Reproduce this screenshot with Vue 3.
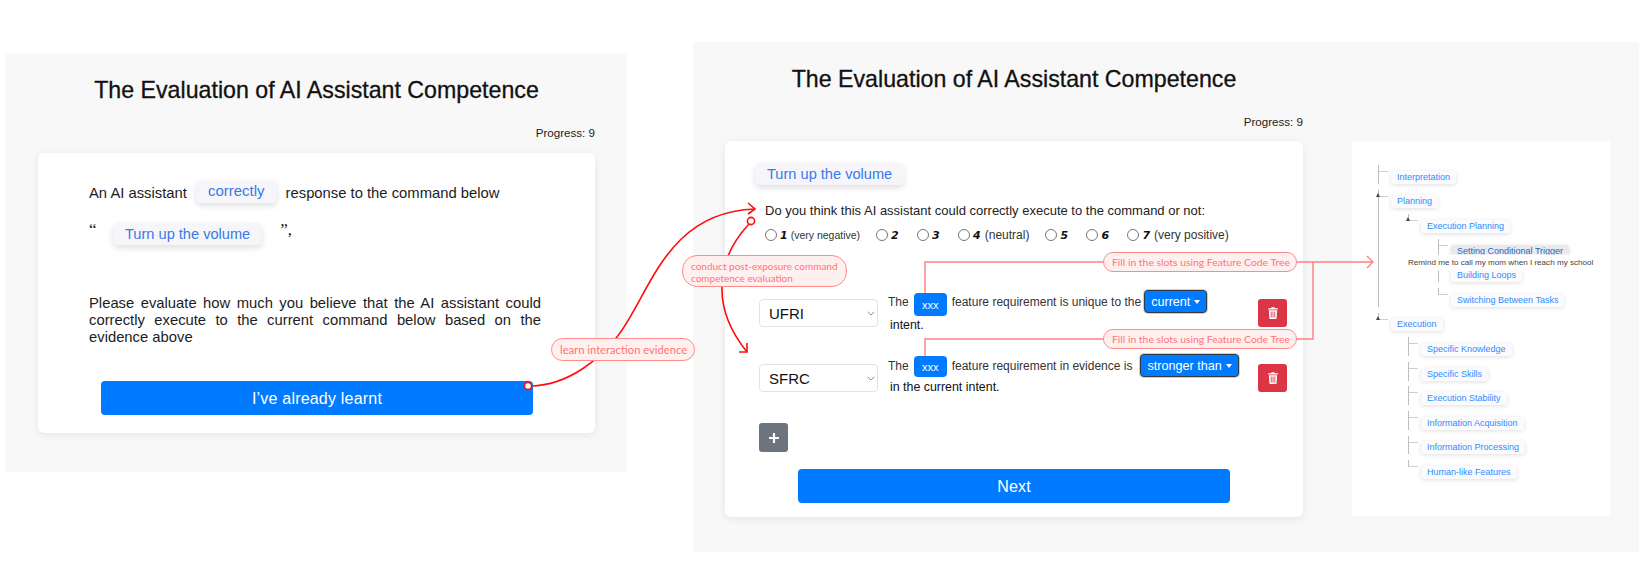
<template>
  <div class="page">
    <!-- first step: learn the evidence -->
    <section class="panel panel-left">
      <div class="main">
        <h1 class="title">The Evaluation of AI Assistant Competence</h1>
        <div class="progress">Progress: 9</div>
        <div class="card learn-card">
          <div class="line line-one">
            <span class="plain">An AI assistant</span>
            <span class="chip chip-small">correctly</span>
            <span class="plain">response to the command below</span>
          </div>
          <div class="line line-two">
            <span class="quote">“</span>
            <span class="chip">Turn up the volume</span>
            <span class="quote quote-end">”,</span>
          </div>
          <p class="ask">
            Please evaluate how much you believe that the AI assistant could correctly execute to the current command below based on the evidence above
          </p>
          <button class="wide-btn">I’ve already learnt</button>
        </div>
      </div>
    </section>

    <!-- second step: rate the command and fill in the rules -->
    <section class="panel panel-right">
      <div class="main main-right">
        <h1 class="title">The Evaluation of AI Assistant Competence</h1>
        <div class="progress">Progress: 9</div>
        <div class="card eval-card">
          <span class="chip chip-command">Turn up the volume</span>
          <div class="question">Do you think this AI assistant could correctly execute to the command or not:</div>
          <div class="scale">
            <label class="scale-item" v-for="opt in scale" :key="opt.value">
              <input type="radio" name="score" />
              <b class="digit">{{ opt.value }}</b>
              <span v-if="opt.note" class="note">{{ opt.note }}</span>
            </label>
          </div>

          <div class="rule" :class="{ compact: rule.compact }" v-for="rule in rules" :key="rule.code">
            <div class="select-wrap">
              <select class="code-select">
                <option>{{ rule.code }}</option>
              </select>
              <svg class="chevron" width="8" height="5" viewBox="0 0 8 5">
                <path d="M.7.8 4 4 7.3.8" fill="none" stroke="#8a9096" stroke-width="1" />
              </svg>
            </div>
            <div class="sentence">
              <div class="sentence-top">
                <span class="the">The</span>
                <span class="slot">xxx</span>
                <span class="middle">{{ rule.middle }}</span>
                <button class="drop">{{ rule.choice }}<i class="drop-caret"></i></button>
              </div>
              <div class="sentence-end">{{ rule.end }}</div>
            </div>
            <button class="icon-btn danger">
              <svg width="10" height="12" viewBox="0 0 10 12">
                <path fill="#fff" d="M.2 1.2h2.9L3.6.3h2.8l.5.9h2.9v1.3H.2zM.9 3.2h8.2l-.5 8.1c0 .4-.3.7-.7.7H2.1c-.4 0-.7-.3-.7-.7zM2.8 4.5v6h.8v-6zm1.8 0v6h.8v-6zm1.8 0v6h.8v-6z" fill-rule="evenodd" />
              </svg>
            </button>
          </div>

          <button class="icon-btn add">
            <svg width="12" height="12" viewBox="0 0 12 12">
              <path d="M6 1v10M1 6h10" stroke="#fff" stroke-width="2.2" />
            </svg>
          </button>
          <button class="wide-btn next-btn">Next</button>
        </div>
      </div>

      <!-- feature code tree -->
      <div class="tree-box">
        <ul class="tree">
          <li v-for="a in tree" :key="a.name">
            <i v-if="a.children" class="caret"></i>
            <span class="node">{{ a.name }}</span>
            <ul v-if="a.children" class="tree">
              <li v-for="b in a.children" :key="b.name">
                <i v-if="b.children" class="caret"></i>
                <span class="node">{{ b.name }}</span>
                <ul v-if="b.children" class="tree">
                  <li v-for="c in b.children" :key="c.name">
                    <span class="node" :class="{ hovered: c.hovered }">{{ c.name }}</span>
                  </li>
                </ul>
              </li>
            </ul>
          </li>
        </ul>
        <div class="tree-tip">Remind me to call my mom when I reach my school</div>
      </div>
    </section>

    <!-- annotations over both panels -->
    <svg class="overlay" width="1647" height="579" viewBox="0 0 1647 579">
      <g fill="none" stroke="#ff0d0d" stroke-width="1.6">
        <path d="M531 386C570 385 600 358 617 337C650 295 665 212 755 209" />
        <path d="M748 203 755 209 748 214" />
        <path d="M749 224C738 236 730 248 726 262C716 295 725 325 747 352" />
        <path d="M739 352H747V343" />
        <circle cx="528" cy="386" r="3.6" fill="#fff" />
        <circle cx="751" cy="221" r="3.6" fill="#fff" />
      </g>
      <g fill="none" stroke="#ff7f7f" stroke-width="1.4">
        <path d="M925 293V262H1373" />
        <path d="M1367 256 1373 262 1367 268" />
        <path d="M925 356V339H1313V262" />
      </g>
    </svg>
    <div class="pill pill-learn">learn interaction evidence</div>
    <div class="pill pill-conduct">conduct post-exposure command<br />competence evaluation</div>
    <div class="pill pill-fill pill-fill-a">Fill in the slots using Feature Code Tree</div>
    <div class="pill pill-fill pill-fill-b">Fill in the slots using Feature Code Tree</div>
  </div>
</template>

<script setup>
const scale = [
  { value: 1, note: '(very negative)' },
  { value: 2 },
  { value: 3 },
  { value: 4, note: '(neutral)' },
  { value: 5 },
  { value: 6 },
  { value: 7, note: '(very positive)' },
]

const rules = [
  { code: 'UFRI', middle: 'feature requirement is unique to the', choice: 'current', end: 'intent.' },
  { code: 'SFRC', middle: 'feature requirement in evidence is', choice: 'stronger than', end: 'in the current intent.', compact: true },
]

const tree = [
  { name: 'Interpretation' },
  {
    name: 'Planning',
    children: [
      {
        name: 'Execution Planning',
        children: [
          { name: 'Setting Conditional Trigger', hovered: true },
          { name: 'Building Loops' },
          { name: 'Switching Between Tasks' },
        ],
      },
    ],
  },
  {
    name: 'Execution',
    children: [
      { name: 'Specific Knowledge' },
      { name: 'Specific Skills' },
      { name: 'Execution Stability' },
      { name: 'Information Acquisition' },
      { name: 'Information Processing' },
      { name: 'Human-like Features' },
    ],
  },
]
</script>

<style scoped>
.page {
  position: relative;
  display: flex;
  align-items: flex-start;
  width: 1647px;
  height: 579px;
  overflow: hidden;
  background: #fff;
  color: #1c1c1e;
  font-family: "Liberation Sans", Arial, sans-serif;
}

.panel {
  background: #f8f8f8;
  box-sizing: border-box;
}

.panel-left {
  width: 622px;
  height: 419px;
  margin: 53px 0 0 5px;
  padding: 0 32px 0 33px;
}

.panel-right {
  display: flex;
  align-items: flex-start;
  width: 946px;
  height: 510px;
  margin: 42px 0 0 66px;
  padding: 0 29px 0 32px;
}

.main {
  width: 557px;
}

.main-right {
  width: 578px;
  flex: none;
}

.title {
  margin: 24px 0 0;
  font-size: 23.2px;
  line-height: 26px;
  font-weight: 400;
  text-align: center;
  color: #111;
  -webkit-text-stroke: 0.3px #111;
}

.progress {
  margin-top: 23px;
  font-size: 11.6px;
  line-height: 14px;
  text-align: right;
  color: #222;
}

.card {
  box-sizing: border-box;
  margin-top: 13px;
  background: #fff;
  border-radius: 6px;
  box-shadow: 0 2px 8px rgba(0, 0, 0, 0.08);
}

.learn-card {
  height: 280px;
  padding: 27px 54px 0 51px;
  font-size: 14.8px;
}

.line {
  display: flex;
  align-items: center;
}

.line-one {
  align-items: flex-end;
  gap: 9px;
}

.plain {
  margin-bottom: 1.5px;
  line-height: 17px;
}

.line-two {
  margin-top: 20px;
}

.quote {
  width: 24px;
  align-self: flex-start;
  font-family: "Liberation Serif", serif;
  font-size: 17px;
  line-height: 14px;
}

.quote-end {
  margin-left: 18px;
}

.chip {
  display: inline-block;
  height: 22px;
  padding: 0 12px;
  border-radius: 5px;
  background: #f6f6fa;
  box-shadow: 0 3px 6px rgba(0, 0, 0, 0.12);
  color: #3a78e8;
  font-size: 14.6px;
  line-height: 22px;
  white-space: nowrap;
}

.chip-small {
  height: 23px;
  font-size: 15px;
  line-height: 22px;
}

.ask {
  margin: 50px 0 0;
  font-size: 14.8px;
  line-height: 17px;
  text-align: justify;
  color: #1c1c1e;
}

.wide-btn {
  display: block;
  width: 432px;
  height: 34px;
  margin: 35px 0 0 12px;
  border: 0;
  border-radius: 4px;
  background: #007bff;
  color: #fff;
  font: 16px/34px "Liberation Sans", Arial, sans-serif;
  letter-spacing: 0.2px;
}

.eval-card {
  height: 376px;
  margin-top: 12px;
  padding: 22px 16px 0 30px;
}

.chip-command {
  display: block;
  width: fit-content;
}

.question {
  margin: 18px 0 0 10px;
  font-size: 13px;
  line-height: 16px;
  color: #222;
}

.scale {
  display: flex;
  align-items: center;
  gap: 16px;
  height: 16px;
  margin: 8px 0 0 10px;
  font-size: 12px;
  color: #333;
}

.scale-item {
  display: flex;
  align-items: center;
  gap: 3px;
  min-width: 25px;
}

.scale-item input {
  width: 12px;
  height: 12px;
  margin: 0;
}

.digit {
  font-family: "DejaVu Sans", sans-serif;
  font-size: 11px;
  font-style: italic;
  font-weight: 700;
  color: #111;
}

.note {
  margin-left: 1px;
}

.scale-item:first-child .note {
  margin-left: 0;
  font-size: 10.5px;
}

.rule {
  display: flex;
  align-items: center;
  gap: 10px;
  height: 46px;
  margin: 0 0 18px 4px;
}

.rule.compact {
  height: 48px;
  margin-bottom: 21px;
}

.scale + .rule {
  margin-top: 47px;
}

.select-wrap {
  position: relative;
  flex: none;
  width: 119px;
  height: 28px;
}

.code-select {
  appearance: none;
  box-sizing: border-box;
  width: 100%;
  height: 100%;
  padding: 0 0 0 9px;
  border: 1px solid #dfe3e8;
  border-radius: 4px;
  background: #fff;
  color: #111;
  font: 15px "Liberation Sans", Arial, sans-serif;
}

.chevron {
  position: absolute;
  top: 12px;
  right: 3px;
}

.sentence {
  flex: 1;
  align-self: flex-start;
  min-width: 0;
  font-size: 12px;
  color: #333;
}

.sentence-top {
  display: flex;
  align-items: flex-start;
  gap: 5px;
  height: 26px;
  white-space: nowrap;
}

.the,
.middle {
  line-height: 24px;
}

.middle {
  margin-right: -2px;
}

.sentence-end {
  margin: 1px 0 0 2px;
  font-size: 12.4px;
  line-height: 16px;
  color: #111;
}

.slot {
  flex: none;
  width: 33px;
  height: 23px;
  margin-top: 3px;
  border-radius: 4px;
  background: #007bff;
  color: #fff;
  font-size: 11px;
  line-height: 24px;
  text-align: center;
}

.drop {
  flex: none;
  height: 23px;
  padding: 0 6px;
  border: 1px solid #343a40;
  border-radius: 4px;
  background: #007bff;
  box-shadow: 0 0 0 1px rgba(52, 58, 64, 0.25);
  color: #fff;
  font: 12.6px "Liberation Sans", Arial, sans-serif;
}

.drop-caret {
  display: inline-block;
  margin-left: 4px;
  vertical-align: 2px;
  border-top: 4px solid #fff;
  border-left: 3.5px solid transparent;
  border-right: 3.5px solid transparent;
}

.compact .sentence-top {
  height: 23px;
}

.compact .slot {
  height: 21px;
  margin-top: 2px;
  line-height: 22px;
}

.compact .drop {
  margin-left: 5px;
}

.compact .sentence-end {
  margin-top: 2px;
}

.icon-btn {
  display: flex;
  align-items: center;
  justify-content: center;
  flex: none;
  width: 29px;
  height: 28px;
  padding: 0;
  border: 0;
  border-radius: 3px;
}

.danger {
  background: #dc3545;
}

.add {
  height: 29px;
  margin: 0 0 0 4px;
  background: #6c757d;
}

.next-btn {
  margin: 17px 0 0 43px;
}

.tree-box {
  position: relative;
  flex: none;
  box-sizing: border-box;
  width: 258px;
  height: 375px;
  margin: 99px 0 0 49px;
  padding: 24px 0 0 39px;
  background: #fff;
}

.tree {
  margin: 0;
  padding: 0;
  list-style: none;
  font-size: 9px;
}

.tree .tree {
  padding-left: 30px;
}

.tree li {
  position: relative;
  padding-top: 5.8px;
}

.tree li::before {
  content: "";
  position: absolute;
  top: 0;
  left: -13px;
  width: 9px;
  height: 6px;
  border-left: 1px solid #bdbdbd;
  border-bottom: 1px solid #cfcfcf;
}

.tree li:not(:last-child)::after {
  content: "";
  position: absolute;
  top: 0;
  bottom: 0;
  left: -13px;
  border-left: 1px solid #bdbdbd;
}

.caret {
  position: absolute;
  z-index: 1;
  top: 3px;
  left: -15px;
  border-bottom: 4px solid #444;
  border-left: 2.5px solid transparent;
  border-right: 2.5px solid transparent;
}

.node {
  display: block;
  width: fit-content;
  height: 13px;
  margin-bottom: 5.8px;
  padding: 0 6px;
  border-radius: 3px;
  background: #fbfbfd;
  box-shadow: 0 1px 4px rgba(0, 0, 0, 0.13);
  color: #2d8cff;
  line-height: 13px;
  white-space: nowrap;
}

.node.hovered {
  background: #e9e9ee;
  color: #2563b8;
}

.tree-tip {
  position: absolute;
  top: 114px;
  left: 52px;
  padding: 1px 4px;
  background: rgba(255, 255, 255, 0.96);
  box-shadow: 0 0 3px rgba(255, 255, 255, 0.9);
  color: #444;
  font-size: 8.1px;
  line-height: 13px;
  white-space: nowrap;
}

.overlay {
  position: absolute;
  top: 0;
  left: 0;
  pointer-events: none;
}

.pill {
  position: absolute;
  box-sizing: border-box;
  border: 1px solid #ff8a8a;
  border-radius: 12px;
  background: #fff0f0;
  color: #ff7474;
  font-family: Lato, sans-serif;
  font-size: 11.2px;
  line-height: 12px;
  white-space: nowrap;
}

.pill-learn {
  top: 338px;
  left: 551px;
  width: 144px;
  height: 23px;
  padding: 5px 0 0 8px;
}

.pill-conduct {
  top: 255px;
  left: 682px;
  width: 165px;
  height: 32px;
  padding: 4px 0 0 8px;
  border-radius: 15px;
  font-size: 10px;
}

.pill-fill {
  left: 1103px;
  width: 194px;
  height: 20px;
  padding: 3px 0 0 8px;
  border-radius: 10px;
  font-size: 10.4px;
}

.pill-fill-a {
  top: 252px;
}

.pill-fill-b {
  top: 329px;
}
</style>
